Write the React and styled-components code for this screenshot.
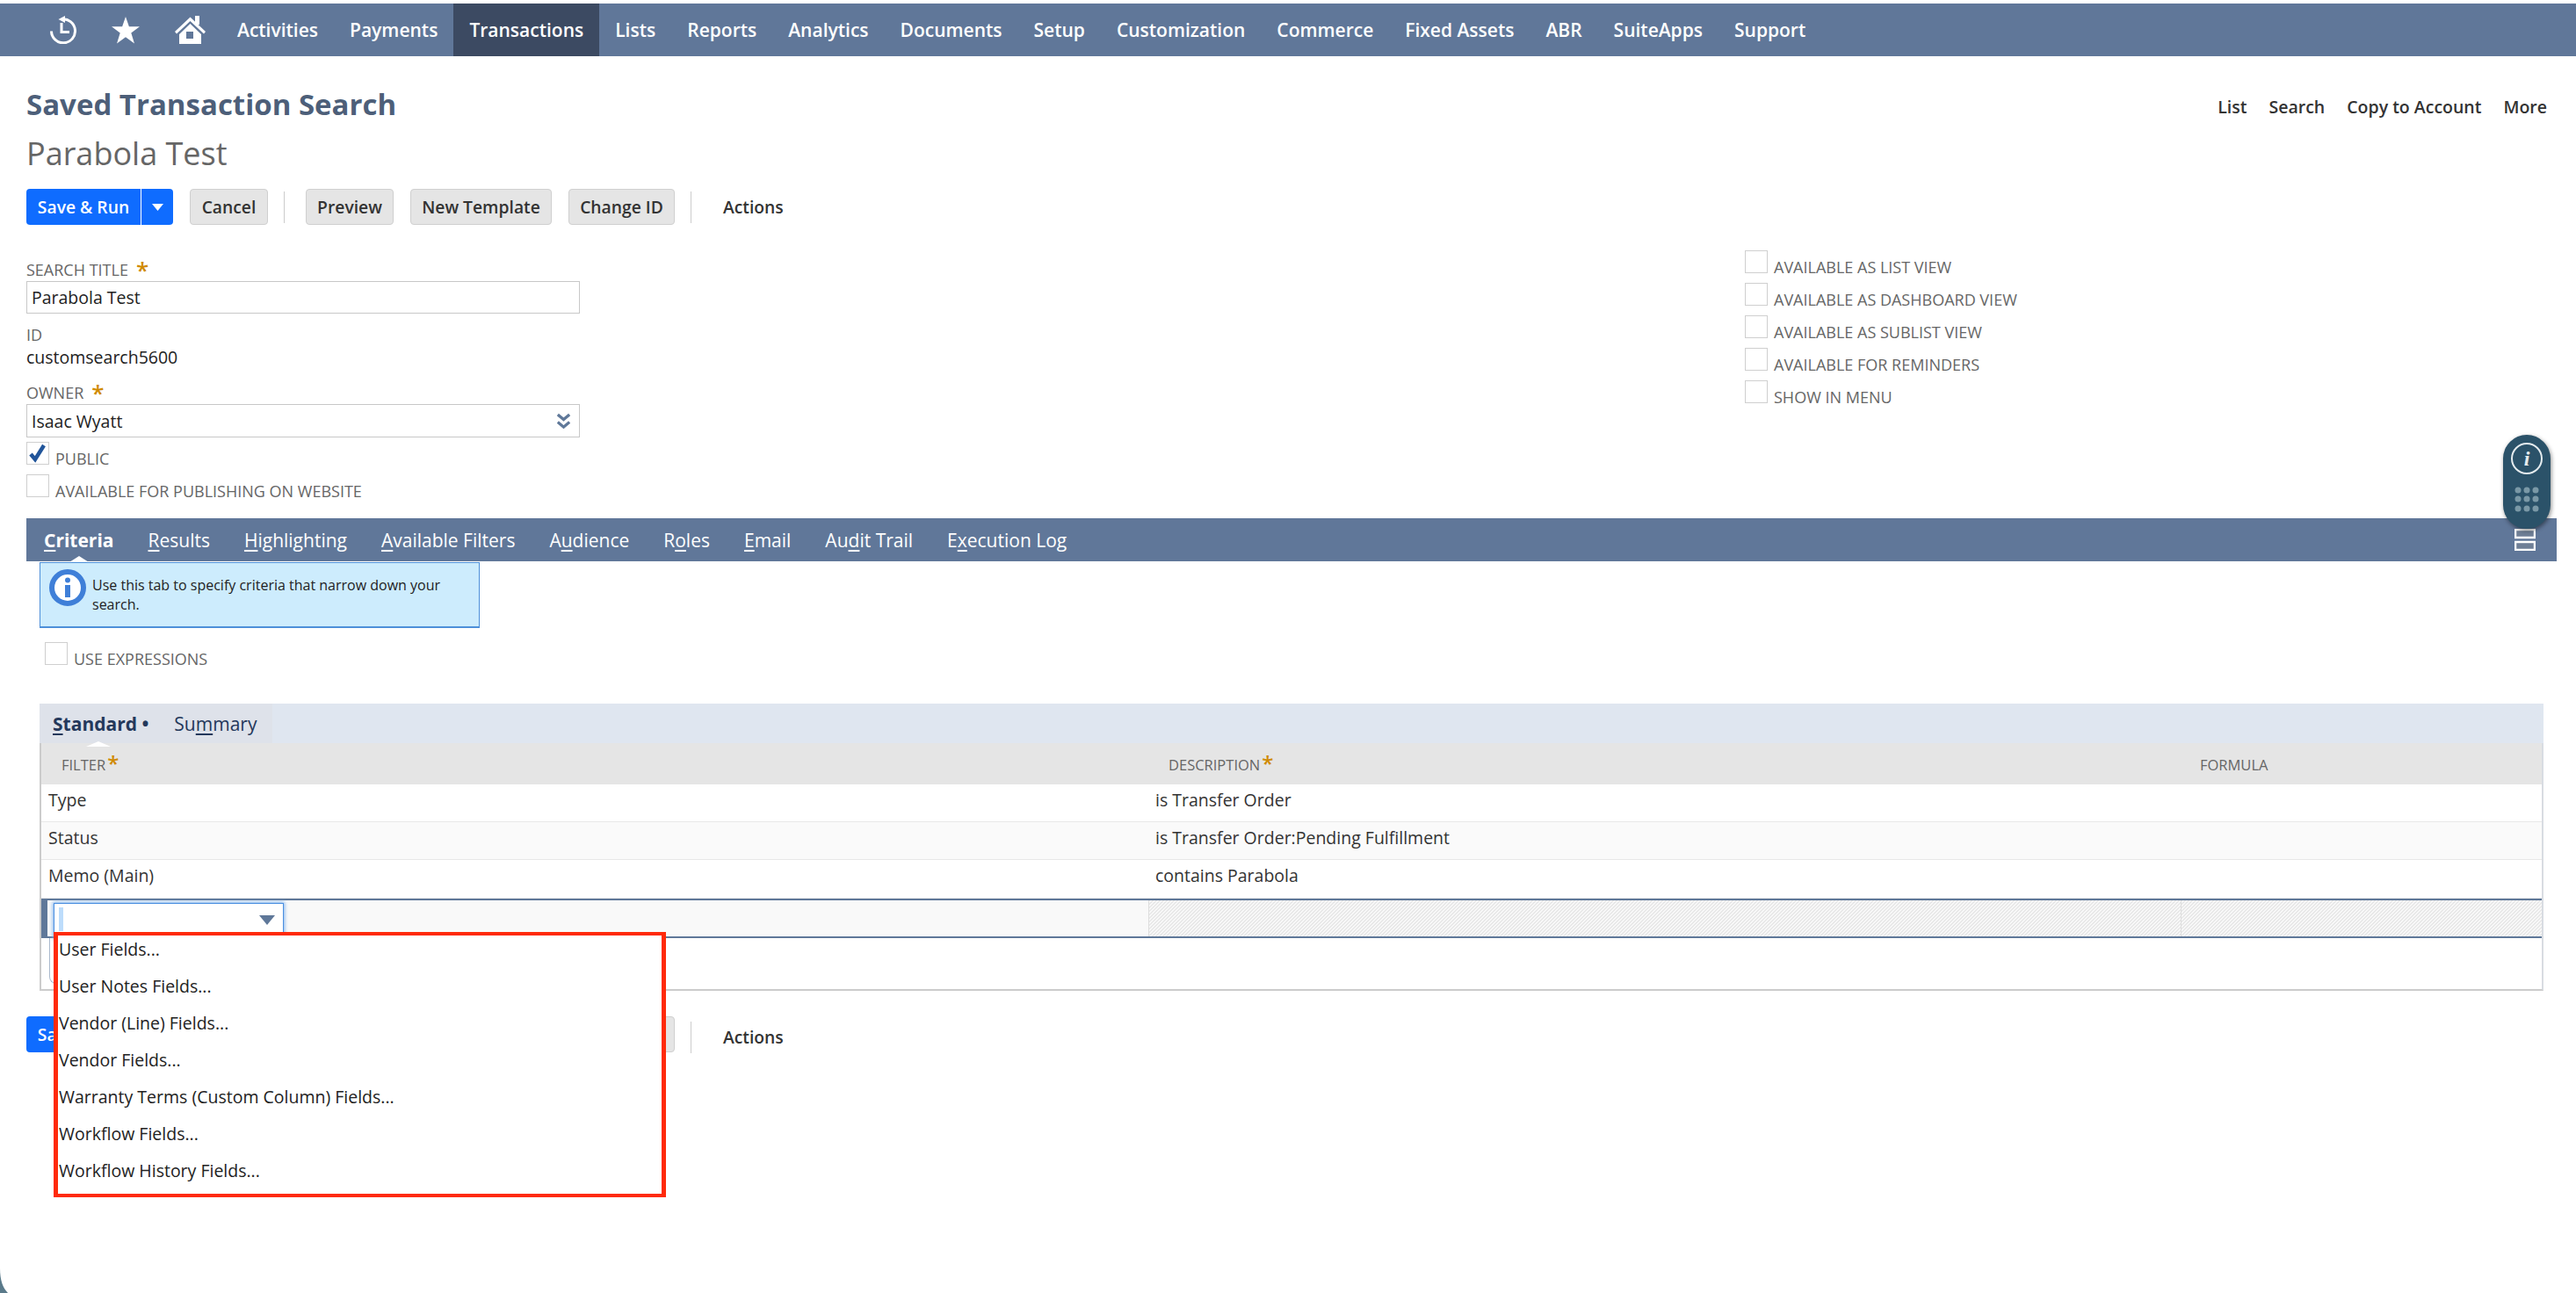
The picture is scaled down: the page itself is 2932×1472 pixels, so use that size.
import React from "react";
import styled, { createGlobalStyle } from "styled-components";

const Global = createGlobalStyle`
  html, body { margin: 0; padding: 0; background: #fff; }
  body { font-family: "Open Sans", "Noto Sans", sans-serif; color: #222; }
`;

const Page = styled.div`
  position: relative;
  width: 2932px;
  height: 1472px;
  overflow: hidden;
  padding-top: 4px;
  box-sizing: border-box;
`;

const NavBar = styled.nav`
  height: 60px;
  background: #607799;
  display: flex;
  align-items: stretch;
`;
const NavIcons = styled.div`
  width: 252px;
  padding-left: 57px;
  box-sizing: border-box;
  display: flex;
  align-items: center;
  gap: 40px;
  color: #fff;
`;
const NavItem = styled.div`
  display: flex;
  align-items: center;
  padding: 0 18px;
  font-size: 21px;
  font-weight: 600;
  color: #fff;
  background: ${(p) => (p.$active ? "#3c4a62" : "transparent")};
`;

const Head = styled.header`
  display: flex;
  justify-content: space-between;
  padding: 31px 33px 0 30px;
`;
const Titles = styled.div`
  display: flex;
  flex-direction: column;
`;
const Title = styled.h1`
  margin: 0;
  font-size: 33px;
  line-height: 48px;
  font-weight: 700;
  color: #4d5f79;
`;
const SubTitle = styled.div`
  font-size: 36px;
  line-height: 48px;
  margin-top: 8px;
  color: #666;
`;
const TopLinks = styled.div`
  display: flex;
  gap: 25px;
  font-size: 19.5px;
  font-weight: 600;
  color: #333;
  padding-top: 13px;
`;

const Toolbar = styled.div`
  display: flex;
  align-items: center;
  height: 41px;
  padding-left: 30px;
  margin-top: ${(p) => p.$top}px;
`;
const Primary = styled.div`
  width: 167px;
  height: 41px;
  border-radius: 4px;
  background: #0f6cff;
  color: #fff;
  font-size: 19.3px;
  font-weight: 600;
  display: flex;
`;
const PrimaryLabel = styled.div`
  width: 130px;
  display: flex;
  align-items: center;
  justify-content: center;
  border-right: 1px solid #fff;
`;
const PrimaryCaret = styled.div`
  flex: 1;
  display: flex;
  align-items: center;
  justify-content: center;
`;
const Btn = styled.div`
  height: 41px;
  box-sizing: border-box;
  width: ${(p) => p.$w}px;
  margin-left: ${(p) => p.$ml}px;
  border: 1px solid #cfcfcf;
  border-radius: 4px;
  background: #e5e5e5;
  color: #333;
  font-size: 19.3px;
  font-weight: 600;
  display: flex;
  align-items: center;
  justify-content: center;
`;
const Sep = styled.div`
  width: 1px;
  height: 36px;
  background: #ccc;
  margin-left: 18px;
  margin-top: ${(p) => p.$drop || 0}px;
`;
const ActionsLabel = styled.div`
  margin-left: 36px;
  margin-top: ${(p) => p.$drop || 0}px;
  font-size: 19.3px;
  font-weight: 600;
  color: #333;
`;

const Form = styled.section`
  display: flex;
  padding: 39px 0 0 30px;
  height: 334px;
  box-sizing: border-box;
`;
const LeftCol = styled.div`
  width: 1956px;
  display: flex;
  flex-direction: column;
`;
const RightCol = styled.div`
  display: flex;
  flex-direction: column;
  gap: 11px;
  margin-top: -10px;
`;
const FieldLabel = styled.div`
  font-size: 18px;
  line-height: 24px;
  color: #666;
  display: flex;
  gap: 9px;
  height: 24px;
  margin-top: ${(p) => p.$top || 0}px;
`;
const Req = styled.span`
  color: #d08a00;
  font-size: 26px;
  line-height: 24px;
  font-weight: 600;
`;
const Input = styled.div`
  width: 630px;
  height: ${(p) => p.$h}px;
  box-sizing: border-box;
  margin-top: 1px;
  border: 1px solid #c8c8c8;
  padding: 0 8px 0 5px;
  font-size: 19.5px;
  color: #222;
  display: flex;
  align-items: center;
  justify-content: space-between;
`;
const ReadOnly = styled.div`
  font-size: 19.5px;
  line-height: 28px;
  color: #222;
`;
const CheckRow = styled.div`
  display: flex;
  align-items: flex-end;
  gap: 7px;
  margin-top: ${(p) => p.$top || 0}px;
  margin-left: ${(p) => p.$left || 0}px;
`;
const Box = styled.div`
  width: 26px;
  height: 26px;
  box-sizing: border-box;
  border: 1px solid #cfcfcf;
  flex: none;
  display: flex;
  align-items: center;
  justify-content: center;
`;
const CheckLabel = styled.div`
  font-size: 18px;
  line-height: 20px;
  color: #666;
  margin-bottom: -3px;
`;

const TabBar = styled.div`
  margin-left: 30px;
  width: 2880px;
  height: 49px;
  background: #607799;
  display: flex;
  align-items: center;
  justify-content: space-between;
  padding: 0 24px 0 20px;
  box-sizing: border-box;
`;
const Tabs = styled.div`
  display: flex;
  gap: 39px;
`;
const Tab = styled.div`
  position: relative;
  font-size: 21px;
  line-height: 30px;
  font-weight: ${(p) => (p.$active ? 700 : 500)};
  color: #fff;
  u { text-underline-offset: 3px; text-decoration-thickness: 2px; }
  ${(p) =>
    p.$active &&
    `&::after {
      content: "";
      position: absolute;
      left: 50%;
      bottom: -10px;
      margin-left: -11px;
      border-left: 11px solid transparent;
      border-right: 11px solid transparent;
      border-bottom: 7px solid #fff;
    }`}
`;

const Body = styled.main`
  padding: 1px 0 0 45px;
`;
const Info = styled.div`
  width: 501px;
  height: 75px;
  box-sizing: border-box;
  background: #cdecfd;
  border: 1px solid #4d8fd9;
  border-bottom-width: 2px;
  display: flex;
  padding: 7px 0 0 10px;
  gap: 7px;
`;
const InfoText = styled.div`
  width: 430px;
  font-size: 16px;
  line-height: 22px;
  color: #222;
  padding-top: 7px;
`;

const SubTabs = styled.div`
  width: 2850px;
  height: 45px;
  background: #dfe6f0;
  display: flex;
  margin-top: 44px;
`;
const SubTabGroup = styled.div`
  width: 265px;
  background: #dee2ea;
  display: flex;
  align-items: center;
  gap: 29px;
  padding-left: 15px;
  box-sizing: border-box;
`;
const SubTab = styled.div`
  position: relative;
  font-size: 21px;
  font-weight: ${(p) => (p.$active ? 700 : 400)};
  color: #24385b;
  u { text-underline-offset: 3px; text-decoration-thickness: 2px; }
  ${(p) =>
    p.$active &&
    `&::after {
      content: "";
      position: absolute;
      left: 38px;
      bottom: -12px;
      border-left: 14px solid transparent;
      border-right: 14px solid transparent;
      border-bottom: 6px solid #fff;
    }`}
`;

const Table = styled.div`
  width: 2850px;
  height: 282px;
  box-sizing: border-box;
  border-left: 2px solid #ccc;
  border-right: 2px solid #d8dce2;
  border-bottom: 2px solid #ccc;
  display: flex;
  flex-direction: column;
`;
const Row = styled.div`
  display: grid;
  grid-template-columns: 1260px 1175px 1fr;
  height: ${(p) => p.$h || 43}px;
  box-sizing: border-box;
  background: ${(p) => p.$bg || "#fff"};
  border-bottom: ${(p) => (p.$line ? "1px solid #e8e8e8" : "none")};
`;
const HeadCell = styled.div`
  font-size: 16.5px;
  color: #666;
  padding: 13px 0 0 ${(p) => p.$pl}px;
  display: flex;
  gap: 2px;
`;
const HeadStar = styled.span`
  color: #d08a00;
  font-size: 24px;
  line-height: 22px;
  font-weight: 600;
  margin-top: -1px;
`;
const Cell = styled.div`
  font-size: 19.5px;
  line-height: 24px;
  color: #333;
  padding: 6px 0 0 8px;
`;
const EditRow = styled.div`
  display: grid;
  grid-template-columns: 1260px 1175px 1fr;
  grid-template-rows: 41px;
  height: 45px;
  box-sizing: border-box;
  border-top: 2px solid #5f7899;
  border-bottom: 2px solid #5f7899;
  background: #f9f9f9;
`;
const EditLead = styled.div`
  border-left: 7px solid #5f7899;
  padding: 3px 0 0 7px;
  box-sizing: border-box;
`;
const Hatch = styled.div`
  border-left: 1px solid #dedede;
  background: repeating-linear-gradient(135deg, #e8e8e8 0, #e8e8e8 1.414px, #f8f8f8 1.414px, #f8f8f8 2.828px);
`;
const Combo = styled.div`
  width: 262px;
  height: 40px;
  box-sizing: border-box;
  background: #fff;
  border: 1px solid #4a8fe0;
  box-shadow: 0 0 4px 1px #7fb2ee;
  display: flex;
  justify-content: space-between;
  padding: 4px 9px 0 5px;
`;
const Caret = styled.div`
  width: 5px;
  height: 27px;
  background: #bcdcfb;
`;
const ComboArrow = styled.div`
  width: 0;
  height: 0;
  margin-top: 9px;
  border-left: 9px solid transparent;
  border-right: 9px solid transparent;
  border-top: 11px solid #5f7899;
`;
const Hint = styled.div`
  margin: 0 0 0 9px;
  width: 260px;
  height: 52px;
  box-sizing: border-box;
  border-left: 1px solid #a9b8cc;
  border-bottom: 1px solid #a9b8cc;
  border-radius: 0 0 0 8px;
`;

const Popup = styled.div`
  position: absolute;
  left: 61px;
  top: 1061px;
  width: 697px;
  height: 302px;
  box-sizing: border-box;
  background: #fff;
  border: 4px solid #ff2a0a;
  border-left-width: 5px;
  border-right-width: 5px;
  padding: 0 0 0 1px;
`;
const PopupItem = styled.div`
  height: 42px;
  line-height: 42px;
  font-size: 19.5px;
  color: #222;
  position: relative;
  top: -5px;
`;

const Widget = styled.div`
  position: absolute;
  left: 2849px;
  top: 495px;
  width: 54px;
  height: 107px;
  border-radius: 27px;
  background: #2b5269;
  box-shadow: 1px 2px 5px rgba(0, 0, 0, 0.45);
`;
const ScreenCorner = styled.svg`
  position: absolute;
  left: 0;
  bottom: 0;
`;

const rows = [
  ["Type", "is Transfer Order", "#fff", 43],
  ["Status", "is Transfer Order:Pending Fulfillment", "#fafafa", 43],
  ["Memo (Main)", "contains Parabola", "#fff", 44],
];
const menu = [
  "User Fields...",
  "User Notes Fields...",
  "Vendor (Line) Fields...",
  "Vendor Fields...",
  "Warranty Terms (Custom Column) Fields...",
  "Workflow Fields...",
  "Workflow History Fields...",
];
const nav = ["Activities", "Payments", "Transactions", "Lists", "Reports", "Analytics", "Documents", "Setup", "Customization", "Commerce", "Fixed Assets", "ABR", "SuiteApps", "Support"];
const rightChecks = ["AVAILABLE AS LIST VIEW", "AVAILABLE AS DASHBOARD VIEW", "AVAILABLE AS SUBLIST VIEW", "AVAILABLE FOR REMINDERS", "SHOW IN MENU"];

function Under({ before = "", u, after = "" }) {
  return <>{before}<u>{u}</u>{after}</>;
}

function ClockIcon() {
  return (
    <svg width="30" height="32" viewBox="0 0 30 32" fill="none" stroke="#fff" strokeWidth="3">
      <path d="M13 4A13.500 13.500 0 1 1 1.500 17.500" />
      <path d="M17 0 9.500 4 17 8z" fill="#fff" stroke="none" />
      <path d="M13 8V18.500H22" />
    </svg>
  );
}
function StarIcon() {
  return (
    <svg width="32" height="31" viewBox="0 0 33 32">
      <path d="M16.500 0l4 11.700H33l-10 7.500 3.800 12.300-10.300-7.500-10.300 7.500L10 19.200 0 11.700h12.500z" fill="#fff" />
    </svg>
  );
}
function HomeIcon() {
  return (
    <svg width="35" height="32" viewBox="0 0 35 32">
      <path d="M17.500 1.500 0 18l2 2.500L17.500 6 33 20.500l2-2.500z" fill="#fff" />
      <rect x="23" y="0" width="5" height="10" fill="#fff" />
      <path fillRule="evenodd" d="M5 21 17.500 9 30 21v11H5zM13 18v8h8v-8z" fill="#fff" />
    </svg>
  );
}

function ButtonRow({ top, caret, drop }) {
  return (
    <Toolbar $top={top}>
      <Primary>
        <PrimaryLabel>Save &amp; Run</PrimaryLabel>
        <PrimaryCaret>
          {caret && (
            <svg width="13" height="8" viewBox="0 0 13 8"><path d="M0 0h13L6.500 8z" fill="#fff" /></svg>
          )}
        </PrimaryCaret>
      </Primary>
      <Btn $w={89} $ml={19}>Cancel</Btn>
      <Sep $drop={drop} />
      <Btn $w={100} $ml={24}>Preview</Btn>
      <Btn $w={161} $ml={19}>New Template</Btn>
      <Btn $w={121} $ml={19}>Change ID</Btn>
      <Sep $drop={drop} />
      <ActionsLabel $drop={drop}>Actions</ActionsLabel>
    </Toolbar>
  );
}

export default function App() {
  return (
    <Page>
      <Global />
      <NavBar>
        <NavIcons>
          <ClockIcon />
          <StarIcon />
          <HomeIcon />
        </NavIcons>
        {nav.map((n) => (
          <NavItem key={n} $active={n === "Transactions"}>{n}</NavItem>
        ))}
      </NavBar>

      <Head>
        <Titles>
          <Title>Saved Transaction Search</Title>
          <SubTitle>Parabola Test</SubTitle>
        </Titles>
        <TopLinks>
          <span>List</span>
          <span>Search</span>
          <span>Copy to Account</span>
          <span>More</span>
        </TopLinks>
      </Head>

      <ButtonRow top={16} caret />

      <Form>
        <LeftCol>
          <FieldLabel>SEARCH TITLE <Req>*</Req></FieldLabel>
          <Input $h={37}>Parabola Test</Input>
          <FieldLabel $top={12}>ID</FieldLabel>
          <ReadOnly>customsearch5600</ReadOnly>
          <FieldLabel $top={14}>OWNER <Req>*</Req></FieldLabel>
          <Input $h={38}>
            Isaac Wyatt
            <svg width="19" height="19" viewBox="0 0 20 20" fill="none" stroke="#5f7899" strokeWidth="3.400">
              <path d="M3 2l7 6 7-6M3 11l7 6 7-6" />
            </svg>
          </Input>
          <CheckRow $top={5}>
            <Box>
              <svg width="20" height="22" viewBox="0 0 20 22" fill="none" stroke="#21559a" strokeWidth="4.500">
                <path d="M2 12l5 6L17 2" />
              </svg>
            </Box>
            <CheckLabel>PUBLIC</CheckLabel>
          </CheckRow>
          <CheckRow $top={11}>
            <Box />
            <CheckLabel>AVAILABLE FOR PUBLISHING ON WEBSITE</CheckLabel>
          </CheckRow>
        </LeftCol>
        <RightCol>
          {rightChecks.map((c) => (
            <CheckRow key={c}>
              <Box />
              <CheckLabel>{c}</CheckLabel>
            </CheckRow>
          ))}
        </RightCol>
      </Form>

      <TabBar>
        <Tabs>
          <Tab $active><Under u="C" after="riteria" /></Tab>
          <Tab><Under u="R" after="esults" /></Tab>
          <Tab><Under u="H" after="ighlighting" /></Tab>
          <Tab><Under u="A" after="vailable Filters" /></Tab>
          <Tab><Under before="A" u="u" after="dience" /></Tab>
          <Tab><Under before="R" u="o" after="les" /></Tab>
          <Tab><Under u="E" after="mail" /></Tab>
          <Tab><Under before="Au" u="d" after="it Trail" /></Tab>
          <Tab><Under before="E" u="x" after="ecution Log" /></Tab>
        </Tabs>
        <svg width="24" height="25" viewBox="0 0 24 25" fill="#6f7f96" stroke="#fff" strokeWidth="2.500">
          <rect x="1" y="1" width="22" height="9" />
          <rect x="1" y="15" width="22" height="9" />
        </svg>
      </TabBar>

      <Body>
        <Info>
          <svg width="42" height="42" viewBox="0 0 42 42">
            <circle cx="21" cy="21" r="18" fill="#fff" stroke="#3f7fd8" strokeWidth="6" />
            <circle cx="21" cy="12.500" r="3" fill="#3f7fd8" />
            <rect x="18" y="18" width="6" height="14" fill="#3f7fd8" />
          </svg>
          <InfoText>Use this tab to specify criteria that narrow down your search.</InfoText>
        </Info>
        <CheckRow $top={16} $left={6}>
          <Box />
          <CheckLabel>USE EXPRESSIONS</CheckLabel>
        </CheckRow>

        <SubTabs>
          <SubTabGroup>
            <SubTab $active><Under u="S" after="tandard" /> •</SubTab>
            <SubTab><Under before="Su" u="m" after="mary" /></SubTab>
          </SubTabGroup>
        </SubTabs>
        <Table>
          <Row $h={47} $bg="#e5e5e5">
            <HeadCell $pl={23}>FILTER<HeadStar>*</HeadStar></HeadCell>
            <HeadCell $pl={23}>DESCRIPTION<HeadStar>*</HeadStar></HeadCell>
            <HeadCell $pl={22}>FORMULA</HeadCell>
          </Row>
          {rows.map(([a, b, bg, h]) => (
            <Row key={a} $bg={bg} $h={h} $line>
              <Cell>{a}</Cell>
              <Cell>{b}</Cell>
              <Cell />
            </Row>
          ))}
          <EditRow>
            <EditLead>
              <Combo>
                <Caret />
                <ComboArrow />
              </Combo>
            </EditLead>
            <Hatch />
            <Hatch />
          </EditRow>
          <Hint />
        </Table>
      </Body>

      <ButtonRow top={29} drop={6} />

      <Popup>
        {menu.map((m) => (
          <PopupItem key={m}>{m}</PopupItem>
        ))}
      </Popup>

      <Widget>
        <svg width="54" height="107" viewBox="0 0 54 107">
          <circle cx="27" cy="27" r="17" fill="none" stroke="#e4ebee" strokeWidth="2" />
          <text x="27" y="35" textAnchor="middle" fontFamily="Liberation Serif" fontStyle="italic" fontWeight="700" fontSize="24" fill="#e4ebee">i</text>
          {[63, 73, 84].map((y) =>
            [17, 27, 37].map((x) => <circle key={`${x}-${y}`} cx={x} cy={y} r="3.500" fill="#7a98a6" />)
          )}
        </svg>
      </Widget>
      <ScreenCorner width="9" height="28" viewBox="0 0 9 28">
        <path d="M0 0C0 13 3 22 9 28H0z" fill="#5a7a8a" />
      </ScreenCorner>
    </Page>
  );
}
